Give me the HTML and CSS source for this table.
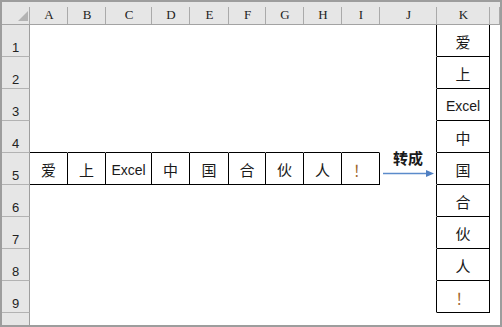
FILE: index.html
```html
<!DOCTYPE html>
<html lang="zh-CN">
<head>
    <meta charset="UTF-8">
    <title>转成一列</title>
    <link rel="stylesheet" href="styles.css">
</head>
<body>
    <div class="sheet">
        <!-- column headers -->
        <div class="corner"><span class="tri"></span></div>
        <div class="ch">A</div><div class="ch">B</div><div class="ch">C</div><div class="ch">D</div>
        <div class="ch">E</div><div class="ch">F</div><div class="ch">G</div><div class="ch">H</div>
        <div class="ch">I</div><div class="ch">J</div><div class="ch">K</div><div class="ch"></div>

        <!-- row 1 -->
        <div class="rh">1</div>
        <div class="c"></div><div class="c"></div><div class="c"></div><div class="c"></div><div class="c"></div>
        <div class="c"></div><div class="c"></div><div class="c"></div><div class="c"></div>
        <div class="c edge-r"></div><div class="c box">爱</div><div class="c"></div>

        <!-- row 2 -->
        <div class="rh">2</div>
        <div class="c"></div><div class="c"></div><div class="c"></div><div class="c"></div><div class="c"></div>
        <div class="c"></div><div class="c"></div><div class="c"></div><div class="c"></div>
        <div class="c edge-r"></div><div class="c box">上</div><div class="c"></div>

        <!-- row 3 -->
        <div class="rh">3</div>
        <div class="c"></div><div class="c"></div><div class="c"></div><div class="c"></div><div class="c"></div>
        <div class="c"></div><div class="c"></div><div class="c"></div><div class="c"></div>
        <div class="c edge-r"></div><div class="c box latin">Excel</div><div class="c"></div>

        <!-- row 4 -->
        <div class="rh">4</div>
        <div class="c edge-b"></div><div class="c edge-b"></div><div class="c edge-b"></div><div class="c edge-b"></div><div class="c edge-b"></div>
        <div class="c edge-b"></div><div class="c edge-b"></div><div class="c edge-b"></div><div class="c edge-b"></div>
        <div class="c edge-r"></div><div class="c box">中</div><div class="c"></div>

        <!-- row 5 -->
        <div class="rh">5</div>
        <div class="c box">爱</div><div class="c box">上</div><div class="c box latin">Excel</div><div class="c box">中</div><div class="c box">国</div>
        <div class="c box">合</div><div class="c box">伙</div><div class="c box">人</div><div class="c box mark">！</div>
        <div class="c edge-r"></div><div class="c box">国</div><div class="c"></div>

        <!-- row 6 -->
        <div class="rh">6</div>
        <div class="c"></div><div class="c"></div><div class="c"></div><div class="c"></div><div class="c"></div>
        <div class="c"></div><div class="c"></div><div class="c"></div><div class="c"></div>
        <div class="c edge-r"></div><div class="c box">合</div><div class="c"></div>

        <!-- row 7 -->
        <div class="rh">7</div>
        <div class="c"></div><div class="c"></div><div class="c"></div><div class="c"></div><div class="c"></div>
        <div class="c"></div><div class="c"></div><div class="c"></div><div class="c"></div>
        <div class="c edge-r"></div><div class="c box">伙</div><div class="c"></div>

        <!-- row 8 -->
        <div class="rh">8</div>
        <div class="c"></div><div class="c"></div><div class="c"></div><div class="c"></div><div class="c"></div>
        <div class="c"></div><div class="c"></div><div class="c"></div><div class="c"></div>
        <div class="c edge-r"></div><div class="c box">人</div><div class="c"></div>

        <!-- row 9 -->
        <div class="rh">9</div>
        <div class="c"></div><div class="c"></div><div class="c"></div><div class="c"></div><div class="c"></div>
        <div class="c"></div><div class="c"></div><div class="c"></div><div class="c"></div>
        <div class="c edge-r"></div><div class="c box mark">！</div><div class="c"></div>

        <!-- partial row 10 -->
        <div class="rh last"></div>
        <div class="c"></div><div class="c"></div><div class="c"></div><div class="c"></div><div class="c"></div>
        <div class="c"></div><div class="c"></div><div class="c"></div><div class="c"></div>
        <div class="c"></div><div class="c"></div><div class="c"></div>

        <!-- label + arrow drawn over the sheet -->
        <div class="convert">
            <div class="convert-label">转成</div>
            <svg class="convert-arrow" width="52" height="7" viewBox="0 0 52 7">
                <line x1="0" y1="3.5" x2="44" y2="3.5" stroke="#5b8bcb" stroke-width="1.3"/>
                <polygon points="43,0 51,3.5 43,7" fill="#4f7fc2"/>
            </svg>
        </div>
    </div>
</body>
</html>
```

FILE: styles.css
```css
body {
    margin: 0;
    background: #fff;
}
.sheet {
    position: relative;
    box-sizing: border-box;
    width: 502px;
    height: 327px;
    border: 2px solid #9d9d9d;
    display: grid;
    grid-template-columns: 28px 38px 38px 46px 38px 39px 37px 38px 38px 38px 57px 53px 10px;
    grid-template-rows: 23px repeat(9, 32px) 12px;
    background: #fff;
    font-family: "Liberation Sans", "Noto Sans CJK SC", sans-serif;
    color: #1a1a1a;
    overflow: hidden;
}
.sheet > div {
    box-sizing: border-box;
}

/* header strip */
.corner, .ch {
    background: linear-gradient(#aaaaaa, #aaaaaa) right bottom / 1px 17px no-repeat, #e6e6e6;
    border-bottom: 1px solid #a3a3a3;
}
.ch {
    display: flex;
    align-items: center;
    justify-content: center;
    padding-top: 3px;
    font-family: "Liberation Serif", "DejaVu Serif", serif;
    font-size: 13px;
    color: #222;
}
.corner {
    position: relative;
}
.tri {
    position: absolute;
    right: 2px;
    bottom: 3px;
    width: 0;
    height: 0;
    border-left: 10px solid transparent;
    border-bottom: 10px solid #b3b3b3;
}
.rh {
    background: #e6e6e6;
    border-right: 1px solid #9e9e9e;
    border-bottom: 1px solid #b2b2b2;
    display: flex;
    align-items: flex-end;
    justify-content: center;
    padding-bottom: 1px;
    font-family: "Liberation Sans", "DejaVu Sans", sans-serif;
    font-size: 13px;
    color: #222;
}
.rh.last {
    border-bottom: none;
}

/* cells */
.c {
    border-right: 1px solid #fff;
    border-bottom: 1px solid #fff;
    display: flex;
    align-items: center;
    justify-content: center;
    padding-top: 2px;
    font-size: 15px;
}
.c.latin {
    font-size: 14px;
}
.c.mark {
    color: #a0672c;
}
.c.box {
    border-right-color: #000;
    border-bottom-color: #000;
}
.c.edge-b {
    border-bottom-color: #000;
}
.c.edge-r {
    border-right-color: #000;
}

.convert {
    position: absolute;
    left: 381px;
    top: 147px;
    width: 52px;
}
.convert-label {
    padding-left: 10px;
    font-family: "Noto Sans CJK SC", sans-serif;
    font-weight: bold;
    font-size: 15px;
    line-height: 17px;
    color: #1a1a1a;
}
.convert-arrow {
    display: block;
    margin-top: 4px;
}
```
